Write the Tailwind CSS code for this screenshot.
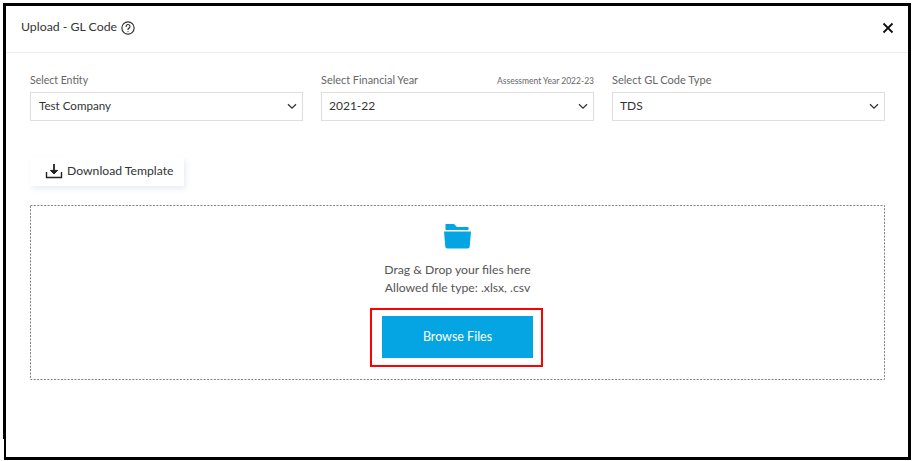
<!DOCTYPE html>
<html lang="en">
  <head>
    <meta charset="UTF-8" />
    <title>Upload - GL Code</title>
    <script src="https://cdn.jsdelivr.net/npm/@tailwindcss/browser@4"></script>
  </head>
  <body class="h-[461px] w-[914px] overflow-hidden bg-white font-['Lato',sans-serif]">
    <div class="pt-[3px] pl-[3px]">
      <!-- frame -->
      <div class="relative h-[457px] w-[908px] border-[3px] border-black bg-white">
        <div class="absolute -left-[3px] top-[433px] h-[21px] w-px bg-white"></div>

        <!-- header -->
        <div class="flex h-[47px] items-center justify-between border-b border-[#ececec] pb-[3px] pl-[15px] pr-[14px]">
          <div class="flex items-center gap-[4px] text-[12.3px] text-[#333]">
            <span>Upload - GL Code</span>
            <svg class="h-[14px] w-[14px]" viewBox="0 0 24 24" fill="none" stroke="#333" stroke-width="2" stroke-linecap="round">
              <circle cx="12" cy="12" r="10.5" />
              <path d="M8.8 9.3a3.3 3.3 0 1 1 4.9 2.9c-1.1.6-1.7 1.2-1.7 2.4" />
              <path d="M12 18v.1" />
            </svg>
          </div>
          <svg class="h-[12px] w-[12px]" viewBox="0 0 12 12" fill="none" stroke="#111" stroke-width="1.8">
            <path d="M1.5 1.5l9 9M10.5 1.5l-9 9" />
          </svg>
        </div>

        <!-- selects -->
        <div class="grid grid-cols-[273px_273px_273px] gap-x-[18px] pl-[24px] pt-[17px]">
          <div>
            <div class="flex h-[20px] items-center pt-px text-[10.5px] text-[#666]">Select Entity</div>
            <div class="mt-[2px] flex h-[29px] items-center justify-between border border-[#dedede] pb-px pl-[8px] pr-[5px] text-[11.6px] text-[#333]">
              <span>Test Company</span>
              <svg class="h-[10px] w-[10px]" viewBox="0 0 10 10" fill="none" stroke="#333" stroke-width="1.3"><path d="M1 3.2l4 4 4-4" /></svg>
            </div>
          </div>
          <div>
            <div class="flex h-[20px] items-center justify-between text-[10.9px] text-[#666]">
              <span>Select Financial Year</span>
              <span class="mt-[3px] text-[8.5px]">Assessment Year 2022-23</span>
            </div>
            <div class="mt-[2px] flex h-[29px] items-center justify-between border border-[#dedede] pb-px pl-[7px] pr-[5px] text-[12px] text-[#333]">
              <span>2021-22</span>
              <svg class="h-[10px] w-[10px]" viewBox="0 0 10 10" fill="none" stroke="#333" stroke-width="1.3"><path d="M1 3.2l4 4 4-4" /></svg>
            </div>
          </div>
          <div>
            <div class="flex h-[20px] items-center text-[11px] text-[#666]">Select GL Code Type</div>
            <div class="mt-[2px] flex h-[29px] items-center justify-between border border-[#dedede] pb-px pl-[7px] pr-[5px] text-[12px] text-[#333]">
              <span>TDS</span>
              <svg class="h-[10px] w-[10px]" viewBox="0 0 10 10" fill="none" stroke="#333" stroke-width="1.3"><path d="M1 3.2l4 4 4-4" /></svg>
            </div>
          </div>
        </div>

        <!-- download -->
        <div class="pl-[24px] pt-[36px]">
          <div class="flex h-[29px] w-[154px] items-center gap-[4px] pb-px pl-[15px] text-[12.2px] text-[#333] shadow-[2px_3px_5px_rgba(40,90,140,0.1)]">
            <svg class="h-[18px] w-[18px]" viewBox="0 0 18 18" fill="none" stroke="#222" stroke-width="1.4">
              <path d="M1.5 10v5.5h15V10" />
              <path d="M9 2v8" stroke-width="1.8" />
              <path d="M5.4 8.4L9 12l3.6-3.6z" fill="#222" stroke-width="1" />
            </svg>
            <span>Download Template</span>
          </div>
        </div>

        <!-- drop zone -->
        <div class="relative ml-[24px] mt-[19px] flex h-[175px] w-[855px] flex-col items-center pt-[19px]">
          <svg class="absolute inset-0 h-full w-full" fill="none">
            <rect x="0.5" y="0.5" width="854" height="174" stroke="#808080" stroke-dasharray="2 1.4" />
          </svg>
          <svg class="h-[25px] w-[27px]" viewBox="0 0 27 25" fill="#05a5e3">
            <path d="M1.5 0h8.5l3 3h11a.5.5 0 0 1 .5.5V6H1.5z" />
            <path d="M0 7.5h27l-1.3 15.2a2 2 0 0 1-2 1.8H3.3a2 2 0 0 1-2-1.8z" />
          </svg>
          <div class="mt-[12px] text-center text-[12.2px] leading-[18px] text-[#555]">
            <p>Drag &amp; Drop your files here</p>
            <p>Allowed file type: .xlsx, .csv</p>
          </div>
          <div class="mr-[2px] mt-[11px] border-2 border-[#ff0000] pb-[7px] pl-[10px] pr-[8px] pt-[6px]">
            <button class="h-[42px] w-[151px] bg-[#05a5e3] text-[12.5px] text-white">Browse Files</button>
          </div>
        </div>
      </div>
    </div>
  </body>
</html>
